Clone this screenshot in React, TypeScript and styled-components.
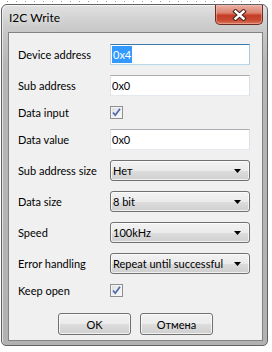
import styled, { createGlobalStyle } from "styled-components";

const GlobalStyle = createGlobalStyle`
  html, body {
    margin: 0;
    background: #ffffff;
  }
  body {
    font-family: Lato, "Liberation Sans", sans-serif;
    font-size: 11px;
    color: #000000;
  }
`;

type Row =
  | { kind: "text"; label: string; value: string; focused?: boolean }
  | { kind: "check"; label: string }
  | { kind: "select"; label: string; value: string };

const rows: Row[] = [
  { kind: "text", label: "Device address", value: "0x4", focused: true },
  { kind: "text", label: "Sub address", value: "0x0" },
  { kind: "check", label: "Data input" },
  { kind: "text", label: "Data value", value: "0x0" },
  { kind: "select", label: "Sub address size", value: "Нет" },
  { kind: "select", label: "Data size", value: "8 bit" },
  { kind: "select", label: "Speed", value: "100kHz" },
  { kind: "select", label: "Error handling", value: "Repeat until successful" },
  { kind: "check", label: "Keep open" },
];

const CheckMark = () => (
  <svg width="11" height="11" viewBox="0 0 11 11">
    <path d="M2 5.5 L4.3 8.2 L9 1.8" fill="none" stroke="#4d68a8" strokeWidth="1.7" />
  </svg>
);

const Arrow = () => (
  <svg width="7" height="4" viewBox="0 0 7 4">
    <path d="M0 0 H7 L3.5 4 Z" fill="#000" />
  </svg>
);

const CloseGlyph = () => (
  <svg width="15" height="12" viewBox="0 0 15 12">
    <path d="M3.5 2.5 L11.5 9.5 M11.5 2.5 L3.5 9.5" stroke="#4a2420" strokeWidth="4.4" strokeLinecap="square" />
    <path d="M3.5 2.5 L11.5 9.5 M11.5 2.5 L3.5 9.5" stroke="#ffffff" strokeWidth="2.4" strokeLinecap="square" />
  </svg>
);

export default function App() {
  return (
    <Page>
      <GlobalStyle />
      <Dots />
      <Window>
        <TitleBar>
          <Title>I2C Write</Title>
          <CloseButton>
            <CloseGlyph />
          </CloseButton>
        </TitleBar>
        <Client>
          <Form>
            {rows.map((row) => (
              <FormRow key={row.label} $short={row.kind === "check"}>
                <Label>{row.label}</Label>
                {row.kind === "text" && (
                  <Field $focused={row.focused}>
                    {row.focused ? <Selected>{row.value}</Selected> : row.value}
                  </Field>
                )}
                {row.kind === "check" && (
                  <CheckBox>
                    <CheckMark />
                  </CheckBox>
                )}
                {row.kind === "select" && (
                  <Select>
                    <span>{row.value}</span>
                    <Arrow />
                  </Select>
                )}
              </FormRow>
            ))}
          </Form>
          <Buttons>
            <Button>OK</Button>
            <Button>Отмена</Button>
          </Buttons>
        </Client>
      </Window>
    </Page>
  );
}

const Page = styled.div`
  width: 272px;
  height: 352px;
  padding: 1px 0 0 1px;
  box-sizing: border-box;
`;

const Dots = styled.div`
  height: 1px;
  margin: 0 4px 2px 6px;
  background: repeating-linear-gradient(90deg, #9a9a9a 0 1px, transparent 1px 9px);
`;

const Window = styled.div`
  width: 267px;
  box-sizing: border-box;
  border: 1px solid #5f6366;
  border-radius: 6px 6px 5px 5px;
  padding: 0 4px 4px 6px;
  background: linear-gradient(
    180deg,
    #e2e2e2 0px,
    #d2d2d2 14px,
    #c6c6c6 28px,
    #b6b6b6 60px,
    #b2b2b2 100%
  );
  box-shadow: inset 1px 1px 0 rgba(255, 255, 255, 0.6);
`;

const TitleBar = styled.div`
  height: 27px;
  display: flex;
  align-items: flex-start;
  justify-content: space-between;
`;

const Title = styled.span`
  padding: 6px 0 0 1px;
  font-size: 12px;
  line-height: 14px;
  color: #000;
  text-shadow: 0 0 6px rgba(255, 255, 255, 0.9);
`;

const CloseButton = styled.div`
  width: 48px;
  height: 20px;
  box-sizing: border-box;
  border: 1px solid #6b2c25;
  border-top: none;
  border-radius: 0 0 5px 5px;
  display: flex;
  align-items: center;
  justify-content: center;
  background: linear-gradient(
    180deg,
    #eab0a3 0%,
    #dc8673 40%,
    #c63d26 55%,
    #c84a32 80%,
    #db7a60 100%
  );
  box-shadow: inset 0 0 0 1px rgba(255, 200, 190, 0.45);
`;

const Client = styled.div`
  border: 1px solid #838383;
  background: #f0f0f0;
  padding: 11px 12px 5px 9px;
  display: flex;
  flex-direction: column;
  gap: 16px;
`;

const Form = styled.div`
  display: flex;
  flex-direction: column;
  gap: 10px;
`;

const FormRow = styled.div<{ $short?: boolean }>`
  display: flex;
  align-items: center;
  height: ${(p) => (p.$short ? 13 : 21)}px;
`;

const Label = styled.span`
  width: 92px;
  flex: none;
  white-space: nowrap;
`;

const Field = styled.div<{ $focused?: boolean }>`
  width: 140px;
  height: 21px;
  box-sizing: border-box;
  border: 1px solid;
  border-color: ${(p) =>
    p.$focused ? "#3d7bad #a4c9e3 #b7d9ed #b5cfe7" : "#abadb3 #dbdfe6 #e3e9ef #e2e3ea"};
  background: #fff;
  padding: 0 1px;
  display: flex;
  align-items: center;
  line-height: 17px;
`;

const Selected = styled.span`
  background: #3399ff;
  color: #fff;
  padding: 0 1px;
`;

const CheckBox = styled.div`
  width: 13px;
  height: 13px;
  box-sizing: border-box;
  border: 1px solid #8f8f8f;
  background: linear-gradient(135deg, #d9dbe0 0%, #eef0f2 60%, #fafafa 100%);
  box-shadow: inset 0 0 0 1px #f4f4f4;
  display: flex;
  align-items: center;
  justify-content: center;
`;

const Select = styled.div`
  width: 140px;
  height: 21px;
  box-sizing: border-box;
  border: 1px solid #707070;
  border-radius: 3px;
  padding: 0 8px 0 2px;
  display: flex;
  align-items: center;
  justify-content: space-between;
  white-space: nowrap;
  background: linear-gradient(180deg, #f2f2f2 0%, #ebebeb 50%, #dddddd 51%, #cfcfcf 100%);
  box-shadow: inset 0 0 0 1px rgba(255, 255, 255, 0.7);
`;

const Buttons = styled.div`
  display: flex;
  justify-content: center;
  gap: 9px;
  padding-left: 3px;
`;

const Button = styled.div`
  width: 73px;
  height: 22px;
  box-sizing: border-box;
  border: 1px solid #707070;
  border-radius: 3px;
  display: flex;
  align-items: center;
  justify-content: center;
  background: linear-gradient(180deg, #f2f2f2 0%, #ebebeb 50%, #dddddd 51%, #cfcfcf 100%);
  box-shadow: inset 0 0 0 1px rgba(255, 255, 255, 0.7);
`;
